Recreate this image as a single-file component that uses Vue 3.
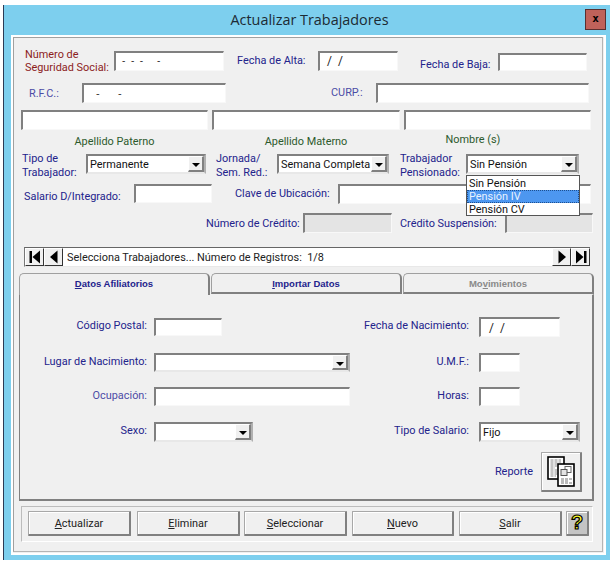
<script setup>
const bottomButtons = [
  { key: 'A', rest: 'ctualizar', cls: 'b1' },
  { key: 'E', rest: 'liminar', cls: 'b2' },
  { key: 'S', rest: 'eleccionar', cls: 'b3' },
  { key: 'N', rest: 'uevo', cls: 'b4' },
  { key: 'S', rest: 'alir', cls: 'b5' }
]
</script>

<template>
  <div class="page">
    <div class="win">
      <div class="title">Actualizar Trabajadores<span class="close">x</span></div>
      <div class="client">
        <div class="inner">
          <div class="row r1">
            <div class="lbl red l1a">Número de<br />Seguridad Social:</div>
            <div class="inp i1a"><span class="mask">- &nbsp;- &nbsp;- &nbsp; &nbsp; -</span></div>
            <div class="lbl l1b">Fecha de Alta:</div>
            <div class="inp i1b"><span class="val">/ &nbsp;/</span></div>
            <div class="lbl l1c">Fecha de Baja:</div>
            <div class="inp i1c"></div>
          </div>

          <div class="row r2">
            <div class="lbl soft l2a">R.F.C.:</div>
            <div class="inp i2a"><span class="mask2">- &nbsp; &nbsp; &nbsp;-</span></div>
            <div class="lbl soft l2b">CURP.:</div>
            <div class="inp i2b"></div>
          </div>

          <div class="row r3">
            <div class="inp i3a"></div>
            <div class="inp i3b"></div>
            <div class="inp i3c"></div>
          </div>

          <div class="row r4">
            <div class="cap c1">Apellido Paterno</div>
            <div class="cap c2">Apellido Materno</div>
            <div class="cap c3">Nombre (s)</div>
          </div>

          <div class="row r5">
            <div class="lbl multi l5a">Tipo de<br />Trabajador:</div>
            <div class="sel s5a"><span class="seltext">Permanente</span><span class="arrow"></span></div>
            <div class="lbl multi l5b">Jornada/<br />Sem. Red.:</div>
            <div class="sel s5b"><span class="seltext">Semana Completa</span><span class="arrow"></span></div>
            <div class="lbl multi l5c">Trabajador<br />Pensionado:</div>
            <div class="sel s5c">
              <span class="seltext">Sin Pensión</span><span class="arrow"></span>
              <div class="list">
                <div class="opt">Sin Pensión</div>
                <div class="opt active">Pensión IV</div>
                <div class="opt">Pensión CV</div>
              </div>
            </div>
          </div>

          <div class="row r6">
            <div class="lbl l6a">Salario D/Integrado:</div>
            <div class="inp i6a"></div>
            <div class="lbl l6b">Clave de Ubicación:</div>
            <div class="inp i6b"></div>
          </div>

          <div class="row r7">
            <div class="lbl l7a">Número de Crédito:</div>
            <div class="inp off i7a"></div>
            <div class="lbl l7b">Crédito Suspensión:</div>
            <div class="inp off i7b"></div>
          </div>

          <div class="nav">
            <div class="navbtn">
              <svg width="14" height="14" viewBox="0 0 14 14"><rect x="1.5" y="1" width="2.5" height="12" /><path d="M12 0.5V13.5L4.5 7Z" /></svg>
            </div>
            <div class="navbtn">
              <svg width="14" height="14" viewBox="0 0 14 14"><path d="M10.5 0.5V13.5L3 7Z" /></svg>
            </div>
            <div class="navtext">Selecciona Trabajadores... Número de Registros: &nbsp;1/8</div>
            <div class="navbtn">
              <svg width="14" height="14" viewBox="0 0 14 14"><path d="M3.5 0.5V13.5L11 7Z" /></svg>
            </div>
            <div class="navbtn">
              <svg width="14" height="14" viewBox="0 0 14 14"><path d="M2 0.5V13.5L9.5 7Z" /><rect x="10" y="1" width="2.5" height="12" /></svg>
            </div>
          </div>

          <div class="tabs">
            <div class="tab on"><u>D</u>atos Afiliatorios</div>
            <div class="tab"><u>I</u>mportar Datos</div>
            <div class="tab dim">Mo<u>v</u>imientos</div>
          </div>

          <div class="panel">
            <div class="prow p1">
              <div class="plbl">Código Postal:</div>
              <div class="fcol"><div class="inp f1"></div></div>
              <div class="plbl">Fecha de Nacimiento:</div>
              <div class="fcol2"><div class="inp f2"><span class="val2">/ &nbsp;/</span></div></div>
            </div>
            <div class="prow p2">
              <div class="plbl">Lugar de Nacimiento:</div>
              <div class="fcol"><div class="sel f3"><span class="arrow"></span></div></div>
              <div class="plbl">U.M.F.:</div>
              <div class="fcol2"><div class="inp f4"></div></div>
            </div>
            <div class="prow p3">
              <div class="plbl soft">Ocupación:</div>
              <div class="fcol"><div class="inp f3"></div></div>
              <div class="plbl">Horas:</div>
              <div class="fcol2"><div class="inp f4"></div></div>
            </div>
            <div class="prow p4">
              <div class="plbl">Sexo:</div>
              <div class="fcol"><div class="sel f5"><span class="arrow"></span></div></div>
              <div class="plbl">Tipo de Salario:</div>
              <div class="fcol2"><div class="sel f6"><span class="seltext">Fijo</span><span class="arrow"></span></div></div>
            </div>
            <div class="report">
              <div class="lbl replbl">Reporte</div>
              <div class="btn repbtn">
                <svg width="28" height="31" viewBox="0 0 28 31">
                  <rect x="1" y="1" width="16" height="22" fill="#fff" stroke="#000" stroke-width="1.6" />
                  <path d="M3.5 4H14M3.5 6H14M3.5 8H11M3.5 10H14M3.5 12H8M3.5 14H14M3.5 16H10M3.5 18H14M3.5 20H9" stroke="#8a8a8a" stroke-width="1" stroke-dasharray="3 1" />
                  <rect x="11" y="8" width="16" height="22" fill="#fff" stroke="#000" stroke-width="1.6" />
                  <rect x="18" y="10.5" width="6" height="6" fill="none" stroke="#666" />
                  <rect x="14" y="13.5" width="6" height="6" fill="#e4e4e4" stroke="#555" />
                  <path d="M14 23H25M14 25H22M14 27H25" stroke="#777" stroke-width="1" stroke-dasharray="3 1" />
                </svg>
              </div>
            </div>
          </div>

          <div class="group">
            <div v-for="b in bottomButtons" :key="b.cls" class="btn act" :class="b.cls"><span><u>{{ b.key }}</u>{{ b.rest }}</span></div>
            <div class="btn help"><span class="qm">?</span></div>
          </div>
        </div>
      </div>
    </div>
  </div>
</template>

<style>
html, body { margin: 0; background: #fff; }
</style>

<style scoped>
* { box-sizing: border-box; }
.page {
  width: 610px; height: 565px; overflow: hidden; padding-top: 5px; padding-left: 3px;
  background: #fff; font-family: Roboto, "Liberation Sans", sans-serif; font-size: 10.9px; color: #111;
}
.win {
  width: 607px; height: 555px; background: #7dcfee; border-left: 1px solid #2b3a55;
  padding: 0 4px 5px 7px; position: relative;
}
.title {
  height: 30px; line-height: 30px; text-align: center; padding-left: 2px;
  font-family: "Open Sans", sans-serif; font-size: 14.4px; color: #1c2a33;
}
.close {
  position: absolute; right: 4px; top: 4px; width: 21px; height: 21px; background: #c0625a;
  border: 1px solid #5a3030; font: bold 11px/18px "DejaVu Sans Mono", monospace; color: #000; text-align: center;
}
.client { width: 595px; height: 520px; border: 2px solid #fff; background: #f0f0f0; }
.inner { width: 590px; height: 515px; border: 1px solid #a0a0a0; border-color: #a0a0a0 #b4b4b4 #b4b4b4 #a0a0a0; background: #f0f0f0; }

.row { display: flex; align-items: flex-start; }
.lbl { color: #23238c; line-height: 14px; white-space: nowrap; flex: none; }
.red { color: #8c1c1c; line-height: 13px; }
.soft { color: #4c4ca6; }
.inp {
  height: 20px; background: #fff; flex: none; border-style: solid; border-width: 2px 1px 1px 2px;
  border-color: #808080 #f8f8f8 #f8f8f8 #808080; position: relative;
}
.off { background: #e4e4e4; }
.sel {
  height: 20px; background: #fff; flex: none; position: relative; display: flex; align-items: center;
  border-style: solid; border-width: 2px; border-color: #808080 #b0b0b0 #e8e8e8 #808080; color: #111;
}
.seltext { padding-left: 2px; white-space: nowrap; }
.arrow {
  position: absolute; right: 0; top: 0; bottom: 0; width: 16px; background: #f0f0f0;
  border-style: solid; border-width: 1px 2px 2px 1px; border-color: #fff #808080 #808080 #fff;
}
.arrow::after {
  content: ""; position: absolute; left: 3px; top: 6px; width: 0; height: 0;
  border-left: 4px solid transparent; border-right: 4px solid transparent; border-top: 4px solid #000;
}
.mask { position: absolute; left: 6px; top: 1px; color: #333; font: 10px/14px "Liberation Sans", sans-serif; }
.mask2 { position: absolute; left: 12px; top: 1px; color: #333; font: 11px/14px "Liberation Sans", sans-serif; }
.val { position: absolute; left: 7px; top: 1px; font-size: 12px; line-height: 14px; color: #222; }
.val2 { position: absolute; left: 8px; top: 2px; font-size: 12px; line-height: 14px; color: #222; }

.r1 { margin-top: 10px; height: 25px; padding-left: 11px; }
.l1a { width: 89px; }
.i1a { width: 110px; margin-top: 3px; }
.l1b { width: 81px; margin-left: 13px; margin-top: 6px; }
.i1b { width: 80px; margin-top: 3px; }
.l1c { width: 78px; margin-left: 22px; margin-top: 10px; }
.i1c { width: 89px; height: 18px; margin-top: 5px; }

.r2 { margin-top: 10px; height: 20px; padding-left: 15px; }
.l2a { width: 53px; margin-top: 4px; }
.i2a { width: 144px; }
.l2b { width: 45px; margin-left: 105px; margin-top: 3px; }
.i2b { width: 213px; }

.r3 { margin-top: 7px; height: 20px; padding-left: 7px; gap: 4px; }
.i3a { width: 187px; }
.i3b { width: 188px; }
.i3c { width: 187px; }

.r4 { margin-top: 4px; height: 13px; padding-left: 7px; color: #2d5a2d; }
.cap { text-align: center; line-height: 14px; flex: none; }
.c1 { width: 187px; margin-top: 1px; }
.c2 { width: 188px; margin-left: 4px; margin-top: 1px; }
.c3 { width: 138px; margin-left: 4px; margin-top: -1px; }

.r5 { margin-top: 4px; height: 28px; padding-left: 8px; }
.multi { line-height: 14px; margin-top: 1px; }
.l5a { width: 64px; }
.s5a { width: 120px; margin-top: 3px; }
.l5b { width: 61px; margin-left: 10px; }
.s5b { width: 112px; margin-top: 3px; }
.l5c { width: 66px; margin-left: 11px; }
.s5c { width: 113px; margin-top: 3px; }
.list {
  position: absolute; left: -2px; top: 19px; width: 114px; height: 41px; background: #fff;
  border: 1px solid #555; z-index: 5; padding-top: 1px;
}
.opt { height: 13px; line-height: 13px; padding-left: 2px; color: #111; white-space: nowrap; }
.active { background: #4d97f0; color: #e8f2ff; outline: 1px dotted #1c4f90; outline-offset: -1px; }

.r6 { margin-top: 5px; height: 20px; padding-left: 10px; }
.l6a { width: 110px; margin-top: 6px; }
.i6a { width: 78px; height: 19px; }
.l6b { width: 103px; margin-left: 23px; margin-top: 3px; }
.i6b { width: 253px; }

.r7 { margin-top: 9px; height: 20px; padding-left: 192px; }
.l7a { width: 97px; margin-top: 4px; }
.i7a { width: 89px; }
.l7b { width: 105px; margin-left: 8px; margin-top: 4px; }
.i7b { width: 88px; }

.nav {
  margin: 14px 0 0 10px; width: 566px; height: 20px; background: #fff; display: flex; align-items: stretch;
  border-top: 1px solid #666; border-left: 1px solid #777; border-bottom: 1px solid #e8e8e8;
}
.navbtn {
  width: 19px; flex: none; background: #f0f0f0; display: flex; align-items: center; justify-content: center;
  border-style: solid; border-width: 1px; border-color: #fff #333 #333 #fff;
}
.navtext { flex: 1; padding-left: 4px; line-height: 20px; white-space: nowrap; color: #222; }

.tabs { margin: 6px 0 0 5px; height: 21px; display: flex; }
.tab {
  width: 191px; height: 21px; font-family: "Liberation Sans", sans-serif; font-size: 9.5px; font-weight: bold; color: #23238c; text-align: center; line-height: 20px;
  background: #f0f0f0; border-top-left-radius: 5px; border-top-right-radius: 5px; flex: none;
  border-style: solid; border-width: 1px 2px 2px 1px; border-color: #a0a0a0 #808080 #808080 #a0a0a0; margin-right: 1px;
}
.tab.on { border-bottom: none; position: relative; z-index: 1; height: 22px; }
.dim { color: #8a8a8a; }

.panel {
  margin-left: 5px; width: 575px; height: 207px; background: #f0f0f0; padding-top: 22px;
  border-style: solid; border-width: 1px 2px 2px 1px; border-color: transparent #808080 #808080 #808080;
}
.prow { display: grid; grid-template-columns: 127px 203px 119px 124px; height: 20px; }
.plbl { color: #23238c; text-align: right; line-height: 18px; white-space: nowrap; }
.plbl.soft { color: #4c4ca6; }
.fcol { padding-left: 7px; }
.fcol2 { padding-left: 10px; }
.p2 { margin-top: 16px; }
.p3 { margin-top: 14px; }
.p4 { margin-top: 15px; }
.f1 { width: 68px; height: 18px; margin-top: 1px; }
.f2 { width: 81px; height: 20px; }
.f3 { width: 196px; height: 19px; }
.f4 { width: 41px; height: 19px; }
.f5 { width: 99px; }
.f6 { width: 101px; }

.report { display: flex; justify-content: flex-end; align-items: center; margin-top: 10px; padding-right: 10px; }
.replbl { margin-right: 8px; }
.repbtn { width: 41px; height: 40px; display: flex; align-items: center; justify-content: center; }

.btn {
  background: #f0f0f0; border-style: solid; border-width: 1px 2px 2px 1px; border-color: #a8a8a8 #808080 #808080 #a8a8a8;
  box-shadow: inset 1px 1px 0 #fff; border-radius: 1px; flex: none;
}
.group {
  margin: 5px 0 0 7px; width: 572px; height: 36px; display: flex; align-items: flex-start; padding: 4px 0 0 6px;
  border-top: 1px solid #bcbcbc; border-left: 1px solid #bcbcbc; border-right: 1px solid #fff; border-bottom: 1px solid #fff;
}
.act { height: 25px; width: 103px; text-align: center; line-height: 23px; color: #222; }
.b2 { margin-left: 6px; }
.b3 { margin-left: 4px; }
.b4 { margin-left: 5px; width: 102px; }
.b5 { margin-left: 5px; }
.help { margin-left: 4px; width: 23px; height: 25px; background: #c4c4c4; text-align: center; }
.qm { font: bold 20px/21px "Liberation Sans", sans-serif; color: #ffff20; -webkit-text-stroke: 1.2px #000; }
</style>
